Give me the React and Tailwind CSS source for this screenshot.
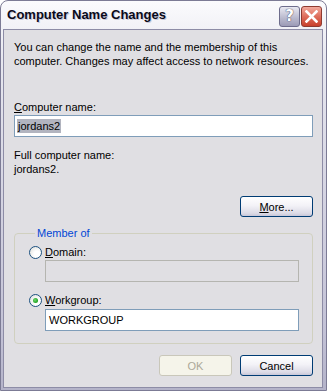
import React from "react";

function Radio({ checked }) {
  return (
    <span className="relative inline-block w-[13px] h-[13px] rounded-full border border-[#1c5180] bg-[radial-gradient(circle_at_65%_65%,#ffffff_30%,#dcdcd7_100%)] shrink-0">
      {checked && (
        <span className="absolute left-[3px] top-[3px] w-[5px] h-[5px] rounded-full bg-[radial-gradient(circle_at_40%_40%,#6fd86f_0%,#21a121_70%)]" />
      )}
    </span>
  );
}

function XPButton({ children, disabled, className = "" }) {
  if (disabled) {
    return (
      <div className={"h-[21px] w-[73px] rounded-[3px] border border-[#c9c7ba] bg-[#f5f4ea] flex items-center justify-center text-[#aca899] " + className}>
        {children}
      </div>
    );
  }
  return (
    <div className={"h-[21px] w-[73px] rounded-[3px] border border-[#003c74] bg-[linear-gradient(to_bottom,#ffffff_0%,#f3f2f7_45%,#dcdbe6_85%,#c8c7d8_100%)] flex items-center justify-center text-black " + className}>
      {children}
    </div>
  );
}

export default function App() {
  return (
    <div className="w-[327px] h-[391px] bg-white font-['Liberation_Sans',Arial,sans-serif] text-[11px] leading-[14px] text-black">
      <div className="w-full h-full flex flex-col rounded-t-[8px] border border-[#7c7b95] bg-[linear-gradient(to_bottom,#fbfbfd_0%,#e7e7ef_15%,#d2d1e0_55%,#c3c2d6_85%,#b4b3c9_100%)] overflow-hidden">
        {/* Title bar */}
        <div className="h-[28px] flex items-center justify-between pl-[6px] pr-[4px] shrink-0">
          <span className="font-['Liberation_Sans',Arial,sans-serif] font-bold text-[13px] text-[#0a0a1a] [text-shadow:1px_1px_0_#c8c8d8]">
            Computer Name Changes
          </span>
          <div className="flex gap-[1px] mt-[2px]">
            <div className="w-[21px] h-[21px] rounded-[3px] border border-[#6e6d8c] bg-[linear-gradient(to_bottom,#e9e9f2_0%,#b8b8cc_60%,#9c9bb6_100%)] flex items-center justify-center">
              <span className="font-['DejaVu_Sans',sans-serif] font-bold text-[15px] leading-none text-white [text-shadow:0_0_1px_#44445e,0_0_1px_#44445e]">?</span>
            </div>
            <div className="w-[21px] h-[21px] rounded-[3px] border border-[#8e3a30] bg-[linear-gradient(to_bottom,#f2a99c_0%,#de6e5c_50%,#c8402c_100%)] flex items-center justify-center">
              <svg width="13" height="13" viewBox="0 0 13 13">
                <path d="M1.5 1.5 L11.5 11.5 M11.5 1.5 L1.5 11.5" stroke="#ffffff" strokeWidth="2.6" strokeLinecap="square" />
              </svg>
            </div>
          </div>
        </div>
        {/* Body */}
        <div className="flex-1 ml-[2px] mr-[3px] mb-[2px] bg-[#e0dfe3] border border-[#8d8ca6] flex flex-col pl-[10px] pr-[9px] pt-[10px]">
          <p>
            You can change the name and the membership of this
            <br />
            computer. Changes may affect access to network resources.
          </p>
          <div className="mt-[32px]">
            <span className="underline">C</span>omputer name:
          </div>
          <div className="mt-[1px] h-[22px] border border-[#7f9db9] bg-white flex items-center pl-[2px]">
            <span className="bg-[#b2b4bf] px-[1px]">jordans2</span>
          </div>
          <div className="mt-[11px]">Full computer name:</div>
          <div>jordans2.</div>
          <div className="mt-[20px] flex justify-end">
            <XPButton>
              <span><span className="underline">M</span>ore...</span>
            </XPButton>
          </div>
          <fieldset className="mt-[9px] border border-[#d0d0bf] rounded-[4px] pl-[14px] pr-[13px] pb-[12px]">
            <legend className="ml-[6px] px-[2px] text-[#0046d5]">Member of</legend>
            <div className="mt-[5px] flex items-center gap-[3px] h-[14px]">
              <Radio />
              <span><span className="underline">D</span>omain:</span>
            </div>
            <div className="mt-[1px] ml-[16px] h-[22px] border border-[#b5b5b0] bg-[#e0dfe3]" />
            <div className="mt-[11px] flex items-center gap-[3px] h-[14px]">
              <Radio checked />
              <span><span className="underline">W</span>orkgroup:</span>
            </div>
            <div className="mt-[2px] ml-[16px] h-[22px] border border-[#7f9db9] bg-white flex items-center pl-[3px]">
              WORKGROUP
            </div>
          </fieldset>
          <div className="mt-[11px] flex justify-end gap-[8px]">
            <XPButton disabled>OK</XPButton>
            <XPButton>Cancel</XPButton>
          </div>
        </div>
      </div>
    </div>
  );
}
